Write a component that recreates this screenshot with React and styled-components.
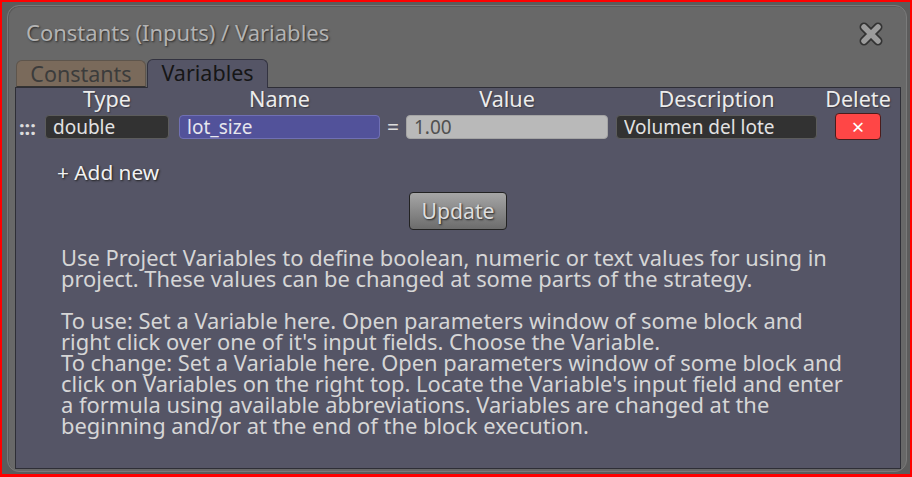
import React from "react";
import styled, { createGlobalStyle } from "styled-components";

const GlobalStyle = createGlobalStyle`
  html, body {
    margin: 0;
    padding: 0;
    background: #5c5c5c;
  }
  body {
    font-family: "Noto Sans", "Open Sans", sans-serif;
  }
  * {
    box-sizing: border-box;
  }
`;

const App = () => {
  return (
    <>
      <GlobalStyle />
      <Frame>
        <Window>
          <TitleBar>
            <Title>Constants (Inputs) / Variables</Title>
            <CloseButton aria-label="close">
              <svg width="28" height="28" viewBox="0 0 28 28">
                <path d="M7 7 L21 21 M21 7 L7 21" stroke="#333" strokeWidth="9" strokeLinecap="round" />
                <path d="M7 7 L21 21 M21 7 L7 21" stroke="#9c9c9c" strokeWidth="5.5" strokeLinecap="round" />
              </svg>
            </CloseButton>
          </TitleBar>

          <Tabs>
            <Tab $w={130}>Constants</Tab>
            <Tab $w={121} $active>Variables</Tab>
          </Tabs>

          <Panel>
            <Row>
              <Cell $w={29} />
              <Head $w={124}>Type</Head>
              <Cell $w={10} />
              <Head $w={201}>Name</Head>
              <Cell $w={26} />
              <Head $w={202}>Value</Head>
              <Cell $w={8} />
              <Head $w={201}>Description</Head>
              <Head $w={82}>Delete</Head>
            </Row>

            <Row $top={5}>
              <Handle $w={29}>:::</Handle>
              <Field $w={124} $kind="dark" defaultValue="double" />
              <Cell $w={10} />
              <Field $w={201} $kind="blue" defaultValue="lot_size" />
              <Equals $w={26}>=</Equals>
              <Field $w={202} $kind="light" defaultValue="1.00" />
              <Cell $w={8} />
              <Field $w={201} $kind="dark" defaultValue="Volumen del lote" />
              <Cell $w={82}>
                <DeleteButton>×</DeleteButton>
              </Cell>
            </Row>

            <AddNew>+ Add new</AddNew>

            <Center>
              <UpdateButton>Update</UpdateButton>
            </Center>

            <Help>
              Use Project Variables to define boolean, numeric or text values for using in
              project. These values can be changed at some parts of the strategy.
              <br />
              <br />
              To use: Set a Variable here. Open parameters window of some block and
              right click over one of it's input fields. Choose the Variable.
              <br />
              To change: Set a Variable here. Open parameters window of some block and
              click on Variables on the right top. Locate the Variable's input field and enter
              a formula using available abbreviations. Variables are changed at the
              beginning and/or at the end of the block execution.
            </Help>
          </Panel>
        </Window>
      </Frame>
    </>
  );
};

const Frame = styled.div`
  width: 912px;
  height: 477px;
  border: 2px solid #ff0000;
  border-bottom-width: 3px;
  padding: 3px 3px 0 5px;
  background: #5c5c5c;
`;

const Window = styled.div`
  height: 467px;
  display: flex;
  flex-direction: column;
  background: #686868;
  border: 1px solid #7a7a7a;
  border-radius: 12px;
  padding: 0 5px 2px 7px;
  box-shadow: inset 1px 1px 0 #5a5a5a;
`;

const TitleBar = styled.div`
  height: 53px;
  display: flex;
  align-items: center;
  justify-content: space-between;
  padding: 0 16px 0 11px;
`;

const Title = styled.div`
  font-size: 22px;
  color: #b3b3b3;
  text-shadow: 1px 1px 2px #2a2a2a;
  margin-top: -1px;
`;

const CloseButton = styled.div`
  width: 28px;
  height: 28px;
  display: flex;
  align-items: center;
  justify-content: center;
  margin-top: 2px;
`;

const Tabs = styled.div`
  display: flex;
  align-items: flex-end;
  gap: 1px;
  padding-left: 1px;
  height: 28px;
`;

const Tab = styled.div`
  width: ${(p) => p.$w}px;
  height: ${(p) => (p.$active ? 29 : 27)}px;
  margin-bottom: ${(p) => (p.$active ? -1 : 0)}px;
  position: relative;
  z-index: ${(p) => (p.$active ? 2 : 1)};
  border: 1px solid ${(p) => (p.$active ? "#333340" : "#5e554c")};
  border-bottom: ${(p) => (p.$active ? "none" : "1px solid #333")};
  border-radius: 6px 6px 0 0;
  background: ${(p) => (p.$active ? "#555566" : "#7a6a5b")};
  color: ${(p) => (p.$active ? "#161616" : "#3c3c3c")};
  font-size: 21.5px;
  line-height: 25px;
  text-align: center;
`;

const Panel = styled.div`
  flex: 1;
  background: #555566;
  border: 1px solid #2e2e36;
  position: relative;
  z-index: 1;
`;

const Row = styled.div`
  display: flex;
  align-items: center;
  margin-top: ${(p) => p.$top || 0}px;
  height: ${(p) => (p.$top ? 24 : 22)}px;
`;

const Cell = styled.div`
  width: ${(p) => p.$w}px;
  flex: none;
  display: flex;
  justify-content: center;
  align-items: center;
`;

const Head = styled(Cell)`
  font-size: 21.6px;
  line-height: 22px;
  color: #ececec;
  text-shadow: 1px 1px 1px #3a3a44;
`;

const Handle = styled(Cell)`
  justify-content: flex-start;
  padding-left: 3px;
  font-size: 20px;
  font-weight: 700;
  color: #dcdcdc;
`;

const Equals = styled(Cell)`
  font-size: 21px;
  color: #dcdcdc;
`;

const fieldColors = {
  dark: { bg: "#323232", border: "#5c5c5c", color: "#e2e2e2" },
  blue: { bg: "#52529a", border: "#7070b4", color: "#e6e6ee" },
  light: { bg: "#b9b9b9", border: "#a4a4a4", color: "#505050" },
};

const Field = styled.input.attrs({ type: "text" })`
  width: ${(p) => p.$w}px;
  height: 24px;
  flex: none;
  padding: 0 7px;
  border-radius: 4px;
  border: 1px solid ${(p) => fieldColors[p.$kind].border};
  background: ${(p) => fieldColors[p.$kind].bg};
  color: ${(p) => fieldColors[p.$kind].color};
  font-family: "Noto Sans", sans-serif;
  font-size: 19px;
  outline: none;
`;

const DeleteButton = styled.div`
  width: 46px;
  height: 27px;
  margin-top: -1px;
  background: #ff4646;
  border: 1px solid #4a1c1c;
  border-radius: 4px;
  color: #ffffff;
  font-size: 22px;
  line-height: 24px;
  text-align: center;
`;

const AddNew = styled.div`
  margin: 20px 0 0 41px;
  font-size: 20.8px;
  line-height: 26px;
  color: #f2f2f2;
  text-shadow: 1px 1px 2px #1e1e1e;
`;

const Center = styled.div`
  display: flex;
  justify-content: center;
  margin-top: 7px;
`;

const UpdateButton = styled.div`
  width: 98px;
  height: 38px;
  border: 1px solid #222;
  border-radius: 4px;
  background: linear-gradient(#a6a6a6, #6c6c6c);
  color: #dedede;
  font-size: 21.2px;
  line-height: 35px;
  text-align: center;
  text-shadow: 1px 1px 2px #222;
`;

const Help = styled.div`
  margin: 17px 0 0 45px;
  width: 788px;
  font-size: 21.9px;
  line-height: 21px;
  color: #d6d6d6;
`;

export default App;
